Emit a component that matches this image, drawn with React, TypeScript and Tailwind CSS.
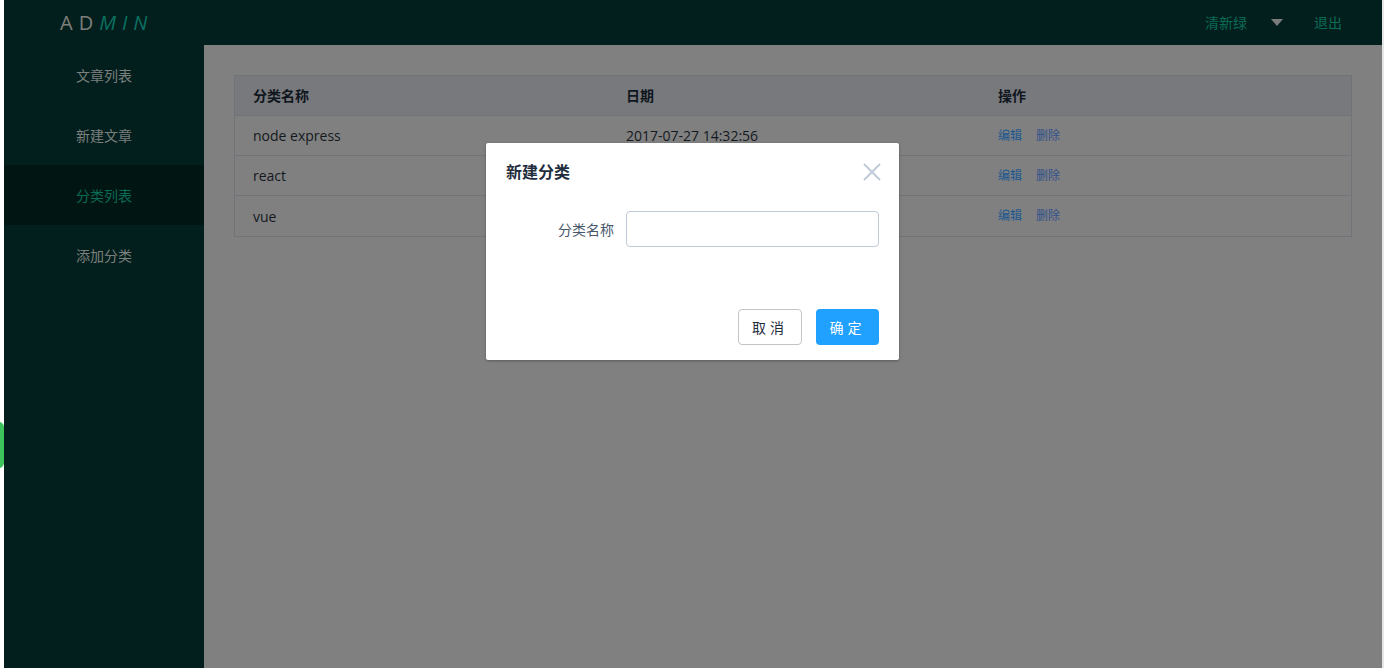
import React from "react";

const font = { fontFamily: '"Open Sans", "Noto Sans CJK SC", "Liberation Sans", sans-serif' };

const rows = [
  { name: "node express", date: "2017-07-27 14:32:56" },
  { name: "react", date: "" },
  { name: "vue", date: "" },
];

const menu = ["文章列表", "新建文章", "分类列表", "添加分类"];

export default function App() {
  return (
    <div className="relative flex h-[668px] w-[1384px] overflow-hidden bg-white" style={font}>
      {/* left browser strip */}
      <div className="relative w-[4px] shrink-0 bg-white">
        <div className="absolute left-[-6px] top-[422px] h-[46px] w-[10px] rounded-full bg-[#3cc45a]" />
      </div>

      <div className="flex min-w-0 flex-1 flex-col">
        {/* header */}
        <header className="flex h-[45px] shrink-0 items-center bg-[#031f1d]">
          <div className="ml-[56px] flex items-center text-[20px] leading-none tracking-[6px]">
            <span className="text-[#7d7f7a]">AD</span>
            <span className="italic text-[#0a7060]">MIN</span>
          </div>
          <div className="ml-auto mr-[40px] flex items-center text-[14px] text-[#0a6b55]">
            <span>清新绿</span>
            <svg width="12" height="8" viewBox="0 0 12 8" className="ml-[24px] mr-[31px]">
              <polygon points="0,0 12,0 6,7" fill="#7a7c7c" />
            </svg>
            <span>退出</span>
          </div>
        </header>

        <div className="flex min-h-0 flex-1">
          {/* sidebar */}
          <aside className="w-[200px] shrink-0 bg-[#031f1d]">
            {menu.map((m, i) => (
              <div
                key={m}
                className={
                  "flex h-[60px] items-center justify-center text-[14px] " +
                  (i === 2 ? "bg-[#011512] text-[#0a6b55]" : "text-[#7b7f7d]")
                }
              >
                {m}
              </div>
            ))}
          </aside>

          {/* main */}
          <main className="flex-1 bg-[#808080] pl-[30px] pr-[30px] pt-[30px]">
            <div className="w-[1118px] border border-[#707377]">
              <div className="grid h-[40px] grid-cols-3 items-center border-b border-[#707377] bg-[#77797c] text-[14px] font-bold text-[#10161d]">
                <div className="pl-[18px]">分类名称</div>
                <div className="pl-[19px]">日期</div>
                <div className="pl-[19px]">操作</div>
              </div>
              {rows.map((r, i) => (
                <div
                  key={r.name}
                  className={
                    "grid h-[40px] grid-cols-3 items-center text-[14px] text-[#14191f] " +
                    (i < rows.length - 1 ? "border-b border-[#707377]" : "")
                  }
                >
                  <div className="pl-[18px]">{r.name}</div>
                  <div className="pl-[19px]">{r.date}</div>
                  <div className="flex gap-[14px] pl-[19px] text-[12px]">
                    <span className="text-[#1a5890]">编辑</span>
                    <span className="text-[#31508c]">删除</span>
                  </div>
                </div>
              ))}
            </div>
          </main>
        </div>
      </div>

      {/* right browser strip */}
      <div className="w-[2px] shrink-0 bg-[#e6e6e6]" />

      {/* dialog */}
      <div className="absolute left-[486px] top-[143px] flex h-[217px] w-[413px] flex-col rounded-[2px] bg-white shadow-[0_1px_3px_rgba(0,0,0,0.3)]">
        <div className="flex items-center justify-between px-[20px] pt-[20px]">
          <span className="text-[16px] font-bold leading-[18px] text-[#1f2d3d]">新建分类</span>
          <svg width="18" height="18" viewBox="0 0 18 18" className="mr-[-2px]">
            <path d="M1 1 L17 17 M17 1 L1 17" stroke="#bfcbd9" strokeWidth="2" />
          </svg>
        </div>
        <div className="flex items-center px-[20px] pt-[30px]">
          <label className="w-[120px] pr-[12px] text-right text-[14px] text-[#48576a]">分类名称</label>
          <input className="h-[36px] w-[253px] rounded-[4px] border border-[#bfcbd9] bg-white px-[10px] text-[14px] outline-none" />
        </div>
        <div className="mt-auto flex justify-end gap-[14px] px-[20px] pb-[15px]">
          <button className="h-[36px] w-[64px] rounded-[4px] border border-[#c4c4c4] bg-white text-[14px] tracking-[4px] text-[#1f2d3d]">
            取消
          </button>
          <button className="h-[36px] w-[63px] rounded-[4px] bg-[#20a0ff] text-[14px] tracking-[4px] text-white">
            确定
          </button>
        </div>
      </div>
    </div>
  );
}
